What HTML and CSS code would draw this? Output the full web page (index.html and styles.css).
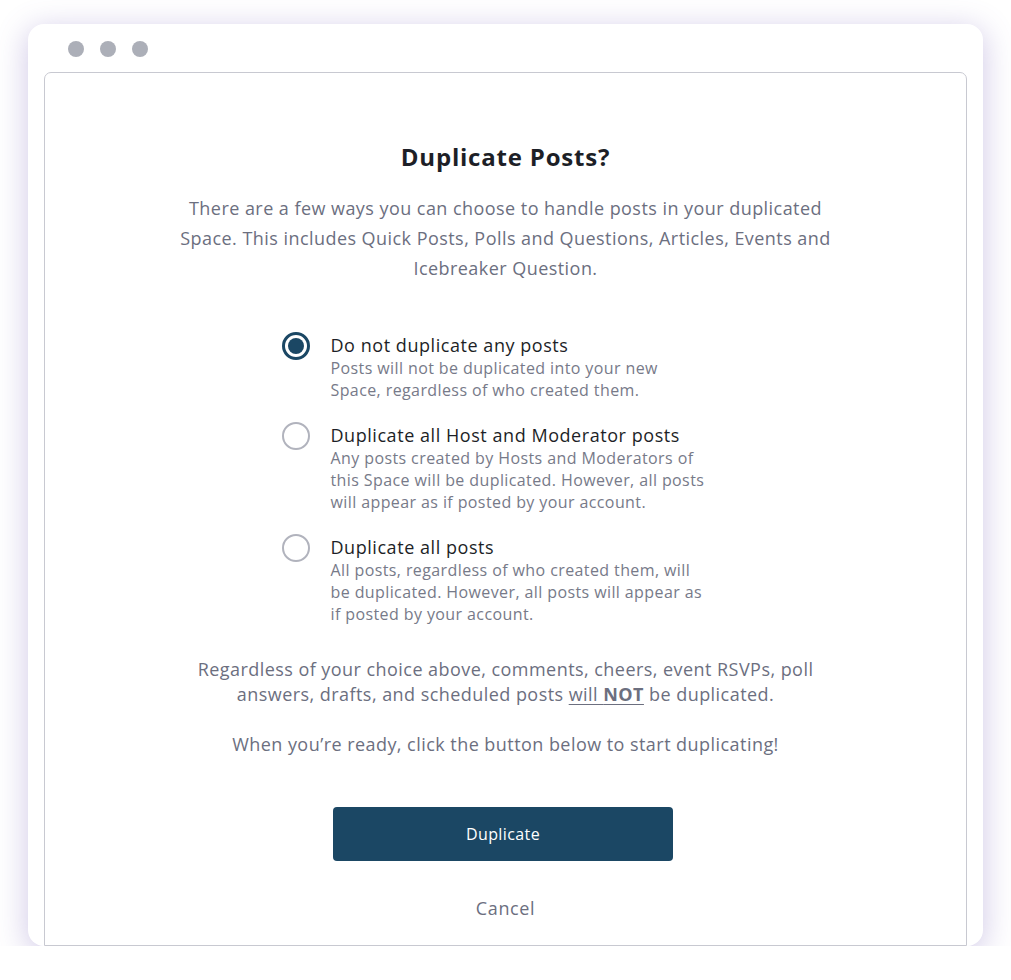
FILE: index.html
```html
<!DOCTYPE html>
<html lang="en">
<head>
<meta charset="utf-8">
<title>Duplicate Posts?</title>
<link rel="stylesheet" href="styles.css">
</head>
<body>
<div class="window">
  <div class="titlebar">
    <span class="dot"></span><span class="dot"></span><span class="dot"></span>
  </div>
  <div class="panel">
    <h1 class="heading">Duplicate Posts?</h1>
    <p class="intro">There are a few ways you can choose to handle posts in your duplicated Space. This includes Quick Posts, Polls and Questions, Articles, Events and Icebreaker Question.</p>
    <div class="options">
      <label class="option">
        <span class="radio radio-checked"><span class="radio-dot"></span></span>
        <span class="option-text">
          <span class="option-title">Do not duplicate any posts</span>
          <span class="option-desc">Posts will not be duplicated into your new Space, regardless of who created them.</span>
        </span>
      </label>
      <label class="option">
        <span class="radio"></span>
        <span class="option-text">
          <span class="option-title">Duplicate all Host and Moderator posts</span>
          <span class="option-desc">Any posts created by Hosts and Moderators of this Space will be duplicated. However, all posts will appear as if posted by your account.</span>
        </span>
      </label>
      <label class="option">
        <span class="radio"></span>
        <span class="option-text">
          <span class="option-title">Duplicate all posts</span>
          <span class="option-desc">All posts, regardless of who created them, will be duplicated. However, all posts will appear as if posted by your account.</span>
        </span>
      </label>
    </div>
    <p class="note">Regardless of your choice above, comments, cheers, event RSVPs, poll answers, drafts, and scheduled posts <span class="emph">will <strong>NOT</strong></span> be duplicated.</p>
    <p class="note note-ready">When you’re ready, click the button below to start duplicating!</p>
    <button class="btn-primary" type="button">Duplicate</button>
    <button class="btn-link" type="button">Cancel</button>
  </div>
</div>
</body>
</html>
```
FILE: styles.css
```css
* { box-sizing: border-box; }
html, body { margin: 0; padding: 0; background: #ffffff; }
body {
  font-family: "Open Sans", "Noto Sans", sans-serif;
  color: #1e2028;
}
.window {
  margin: 24px 0 0 28px;
  width: 955px;
  height: 922px;
  background: #fff;
  border-radius: 16px;
  box-shadow: 0 6px 30px 2px rgba(110, 85, 180, 0.3);
  padding: 0 16px;
  display: flex;
  flex-direction: column;
  overflow: hidden;
}
.titlebar {
  height: 48px;
  flex: 0 0 48px;
  display: flex;
  align-items: center;
  gap: 16px;
  padding: 2px 0 0 24px;
}
.dot {
  width: 16px;
  height: 16px;
  border-radius: 50%;
  background: #acafb8;
}
.panel {
  flex: 1;
  border: 1px solid #c8c9d1;
  border-radius: 7px 7px 0 0;
  display: flex;
  flex-direction: column;
  align-items: center;
  padding-top: 69px;
}
.heading {
  margin: 0;
  font-size: 24px;
  line-height: 30px;
  font-weight: 700;
  letter-spacing: 0.8px;
  color: #1d1f27;
}
.intro {
  margin: 21px 0 0;
  max-width: 665px;
  text-align: center;
  font-size: 18px;
  line-height: 30px;
  letter-spacing: 0.45px;
  color: #6c6f7f;
}
.options {
  margin-top: 50px;
  display: flex;
  flex-direction: column;
  gap: 22px;
  width: 440px;
  margin-left: -8px;
}
.option {
  display: flex;
  align-items: flex-start;
  gap: 21px;
}
.radio {
  flex: 0 0 28px;
  width: 28px;
  height: 28px;
  border-radius: 50%;
  border: 2px solid #b1b3bd;
  margin-top: -1px;
  display: flex;
  align-items: center;
  justify-content: center;
}
.radio-checked { border: 3px solid #1b4764; }
.radio-dot {
  width: 16px;
  height: 16px;
  border-radius: 50%;
  background: #1b4764;
}
.option-text {
  display: flex;
  flex-direction: column;
  max-width: 381px;
}
.option-title {
  font-size: 18px;
  line-height: 24px;
  letter-spacing: 0.55px;
  color: #1d1f27;
}
.option-desc {
  font-size: 16px;
  line-height: 22px;
  letter-spacing: 0.4px;
  color: #777a89;
}
.note {
  margin: 32px 0 0;
  max-width: 640px;
  text-align: center;
  font-size: 18px;
  line-height: 25px;
  letter-spacing: 0.45px;
  color: #6c6f7f;
}
.emph {
  text-decoration: underline;
  text-underline-offset: 3px;
}
.emph strong { font-weight: 700; }
.note-ready { margin-top: 25px; }
.btn-primary {
  margin: 50px 5px 0 0;
  width: 340px;
  height: 54px;
  border: none;
  border-radius: 4px;
  background: #1b4764;
  color: #ffffff;
  font-family: inherit;
  font-size: 16px;
  letter-spacing: 0.4px;
}
.btn-link {
  margin-top: 35px;
  border: none;
  background: none;
  padding: 0;
  font-family: inherit;
  font-size: 18px;
  line-height: 24px;
  letter-spacing: 0.6px;
  color: #6c6f7f;
}
```
